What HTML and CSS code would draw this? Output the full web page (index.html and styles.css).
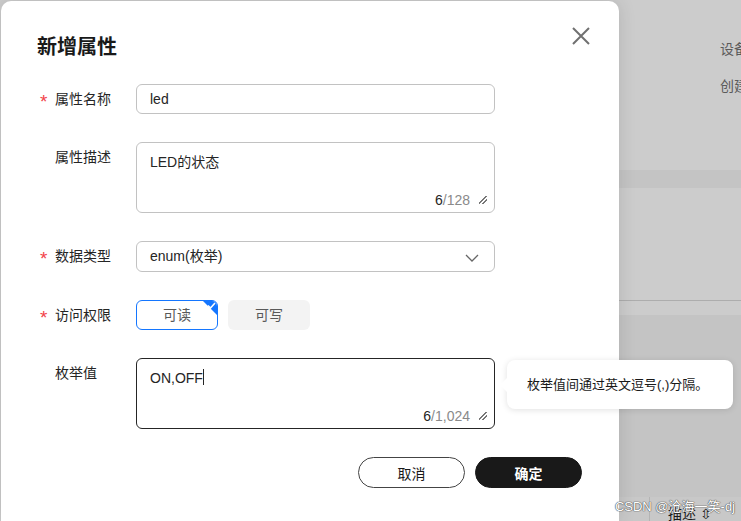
FILE: index.html
```html
<!DOCTYPE html>
<html lang="zh-CN">
<head>
    <meta charset="UTF-8">
    <meta name="viewport" content="width=device-width, initial-scale=1.0">
    <title>新增属性</title>
    <link rel="stylesheet" href="styles.css">
</head>
<body>
    <div class="page">
        <div class="dialog">
            <div class="dialog-header">
                <h2>新增属性</h2>
                <span class="close-btn">
                    <svg width="20" height="20" viewBox="0 0 20 20"><path d="M2 2L18 18M18 2L2 18" stroke="#707070" stroke-width="2" fill="none"/></svg>
                </span>
            </div>

            <div class="form">
                <div class="form-row">
                    <label class="form-label"><span class="req">*</span>属性名称</label>
                    <div class="field input">led</div>
                </div>

                <div class="form-row">
                    <label class="form-label"><span class="req"></span>属性描述</label>
                    <div class="field textarea">
                        LED的状态
                        <div class="counter"><span class="count">6</span>/128<span class="resize"></span></div>
                    </div>
                </div>

                <div class="form-row">
                    <label class="form-label"><span class="req">*</span>数据类型</label>
                    <div class="field input select">
                        enum(枚举)
                        <svg class="chevron" width="14" height="8" viewBox="0 0 14 8"><path d="M1 1L7 7L13 1" stroke="#666" stroke-width="1.3" fill="none"/></svg>
                    </div>
                </div>

                <div class="form-row">
                    <label class="form-label"><span class="req">*</span>访问权限</label>
                    <div class="checks">
                        <span class="check-btn active">可读
                            <span class="corner">
                                <svg width="9" height="7" viewBox="0 0 9 7"><path d="M1 3.5L3.5 6L8 1" stroke="#fff" stroke-width="1.6" fill="none"/></svg>
                            </span>
                        </span>
                        <span class="check-btn">可写</span>
                    </div>
                </div>

                <div class="form-row">
                    <label class="form-label"><span class="req"></span>枚举值</label>
                    <div class="field textarea focused">
                        ON,OFF<span class="caret"></span>
                        <div class="counter"><span class="count">6</span>/1,024<span class="resize"></span></div>
                        <div class="tooltip">枚举值间通过英文逗号(,)分隔。</div>
                    </div>
                </div>
            </div>

            <div class="footer">
                <button class="btn">取消</button>
                <button class="btn primary">确定</button>
            </div>
        </div>

        <div class="side">
            <div class="side-top">
                <div class="side-text">设备名称</div>
                <div class="side-text">创建时间</div>
            </div>
            <div class="side-band"></div>
            <div class="side-mid"></div>
            <div class="side-gap"></div>
            <div class="side-table">
                <div class="side-head">
                    <span class="cell-blank"></span>
                    <span class="cell">描述 ⇳</span>
                </div>
            </div>
        </div>
    </div>

    <div class="watermark">CSDN @沧海一笑-dj</div>
</body>
</html>
```

FILE: styles.css
```css
body {
    margin: 0;
    height: 521px;
    overflow: hidden;
    background-color: #cccccc;
    font-family: "Liberation Sans", "Noto Sans CJK SC", sans-serif;
    color: #252525;
    font-size: 14px;
}
.page {
    display: flex;
    height: 521px;
}
.dialog {
    width: 618px;
    margin: 1px 0 0 1px;
    background-color: white;
    border-radius: 10px 10px 0 0;
    box-shadow: 0 0 18px rgba(0,0,0,0.12);
    box-sizing: border-box;
    padding: 0 37px 0 36px;
    position: relative;
    z-index: 1;
}
.dialog-header {
    display: flex;
    justify-content: space-between;
    align-items: flex-start;
    padding-top: 32px;
    height: 28px;
    margin-bottom: 23px;
}
.dialog-header h2 {
    margin: 0;
    font-size: 20px;
    line-height: 28px;
    font-weight: bold;
    color: #191919;
}
.close-btn {
    margin: -7px -9px 0 0;
}
.form {
    display: flex;
    flex-direction: column;
    gap: 28px;
}
.form-row {
    display: flex;
    align-items: flex-start;
}
.form-label {
    width: 99px;
    height: 30px;
    display: flex;
    line-height: 30px;
    color: #252525;
}
.req {
    width: 18px;
    height: 30px;
    padding-left: 3px;
    box-sizing: border-box;
    color: #f2424a;
    font-size: 19px;
    line-height: 36px;
}
.field {
    width: 359px;
    box-sizing: border-box;
    border: 1px solid #c2c2c2;
    border-radius: 6px;
    padding: 0 13px;
    position: relative;
}
.input {
    height: 30px;
    line-height: 28px;
}
.select {
    height: 31px;
}
.chevron {
    position: absolute;
    right: 15px;
    top: 12px;
}
.textarea {
    height: 71px;
    padding-top: 8px;
    line-height: 22px;
}
.textarea.focused {
    border-color: #252525;
}
.caret {
    display: inline-block;
    width: 1px;
    height: 16px;
    background-color: #252525;
    vertical-align: -2px;
}
.counter {
    position: absolute;
    right: 7px;
    bottom: 2px;
    color: #8a8a8a;
    font-size: 14px;
    line-height: 20px;
    display: flex;
    align-items: center;
}
.count {
    color: #252525;
}
.resize {
    display: inline-block;
    width: 8px;
    height: 8px;
    margin-left: 9px;
    background: linear-gradient(135deg, transparent 40%, #777 40%, #777 52%, transparent 52%, transparent 68%, #777 68%, #777 80%, transparent 80%);
}
.checks {
    display: flex;
    gap: 10px;
}
.check-btn {
    width: 82px;
    height: 30px;
    box-sizing: border-box;
    border-radius: 6px;
    background-color: #f3f3f3;
    color: #595959;
    text-align: center;
    line-height: 30px;
    position: relative;
    overflow: hidden;
}
.check-btn.active {
    background-color: white;
    border: 1px solid #1476ff;
    line-height: 28px;
}
.corner {
    position: absolute;
    top: 0;
    right: 0;
    width: 0;
    height: 0;
    border-top: 14px solid #1476ff;
    border-left: 14px solid transparent;
}
.corner svg {
    position: absolute;
    top: -13px;
    right: 1px;
}
.tooltip {
    position: absolute;
    left: 370px;
    top: 1px;
    width: 226px;
    height: 49px;
    box-sizing: border-box;
    background-color: white;
    border-radius: 8px;
    box-shadow: 0 1px 6px rgba(0,0,0,0.12);
    padding-left: 20px;
    line-height: 49px;
    font-size: 13px;
    color: #191919;
    white-space: nowrap;
}
.tooltip::before {
    content: "";
    position: absolute;
    left: -7px;
    top: 18px;
    border-top: 7px solid transparent;
    border-bottom: 7px solid transparent;
    border-right: 7px solid white;
}
.footer {
    display: flex;
    justify-content: flex-end;
    gap: 10px;
    margin-top: 28px;
}
.btn {
    width: 107px;
    height: 31px;
    border-radius: 16px;
    border: 1px solid #444;
    background-color: white;
    color: #191919;
    font-family: "Liberation Sans", "Noto Sans CJK SC", sans-serif;
    font-size: 14px;
    padding: 0;
}
.btn.primary {
    background-color: #191919;
    border-color: #191919;
    color: white;
    font-weight: bold;
}
.side {
    flex: 1;
    display: flex;
    flex-direction: column;
    overflow: hidden;
    min-width: 0;
}
.side-top {
    height: 170px;
    box-sizing: border-box;
    padding: 39px 0 0 101px;
    white-space: nowrap;
}
.side-text {
    color: #5a5a5a;
    font-size: 14px;
    line-height: 20px;
    margin-bottom: 17px;
}
.side-band {
    height: 18px;
    background-color: #c4c4c4;
}
.side-mid {
    height: 112px;
    border-bottom: 1px solid #adadad;
}
.side-gap {
    height: 14px;
}
.side-table {
    flex: 1;
    background-color: #c4c4c4;
    display: flex;
    flex-direction: column;
    justify-content: flex-end;
}
.side-head {
    height: 24px;
    background-color: #c8c8c8;
    display: flex;
    white-space: nowrap;
}
.cell-blank {
    width: 30px;
    border-right: 1px solid #b4b4b4;
}
.cell {
    padding: 6px 0 0 18px;
    font-size: 14px;
    color: #1a1a1a;
}
.watermark {
    position: absolute;
    right: 6px;
    bottom: 6px;
    z-index: 2;
    font-size: 13px;
    color: #fff;
    text-shadow: 0 0 1px #555, 0 0 1px #555, 0 0 1px #555;
}
```
